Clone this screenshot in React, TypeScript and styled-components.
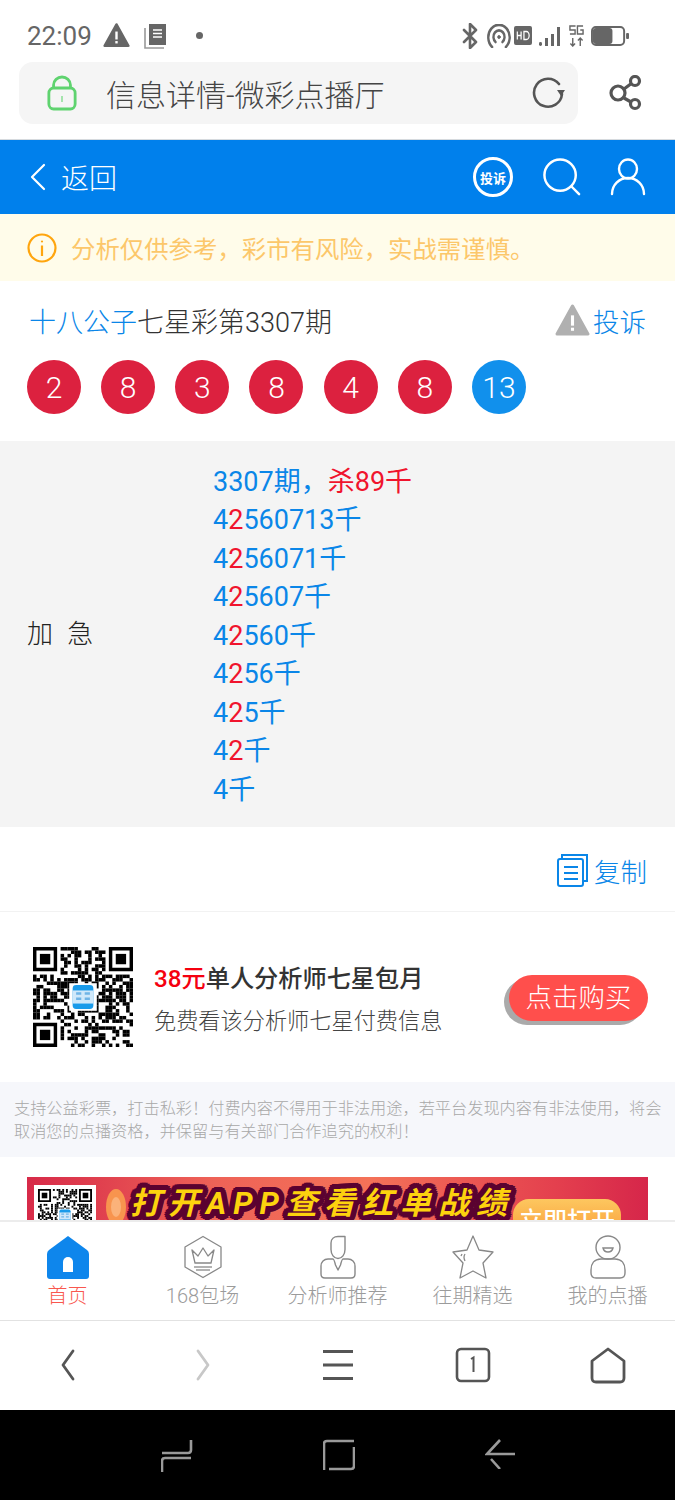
import React from "react";
import styled, { createGlobalStyle } from "styled-components";

const GlobalStyle = createGlobalStyle`
  html, body { margin: 0; padding: 0; background: #fff; }
  body { font-family: Roboto, "Noto Sans CJK SC", sans-serif; }
  * { box-sizing: border-box; }
`;

const Page = styled.div`
  width: 675px;
  height: 1500px;
  display: flex;
  flex-direction: column;
  overflow: hidden;
  background: #fff;
`;

const StatusBar = styled.div`
  height: 62px;
  padding: 9px 46px 0 27px;
  display: flex;
  align-items: center;
  color: #666;
  flex: none;
`;
const Time = styled.span`
  font-size: 26px;
  margin-right: 11px;
`;
const StatusRight = styled.div`
  margin-left: auto;
  display: flex;
  align-items: center;
  gap: 3px;
`;
const Spacer = styled.span<{ $w: number }>`
  width: ${(p) => p.$w}px;
  flex: none;
`;
const Dot = styled.span`
  width: 7px;
  height: 7px;
  border-radius: 50%;
  background: #666;
  margin-left: 26px;
`;

const BrowserBar = styled.div`
  height: 78px;
  flex: none;
  display: flex;
  padding: 0 19px 15px;
  align-items: stretch;
  border-bottom: 1px solid #d6dade;
`;
const UrlBox = styled.div`
  width: 559px;
  background: #f5f5f5;
  border-radius: 14px;
  display: flex;
  align-items: center;
  padding: 0 12px 0 28px;
`;
const UrlText = styled.span`
  font-size: 30px;
  font-weight: 300;
  color: #444;
  margin-left: 29px;
  flex: 1;
  white-space: nowrap;
`;
const ShareSlot = styled.div`
  flex: 1;
  display: flex;
  align-items: center;
  justify-content: flex-end;
  padding-right: 13px;
`;

const AppHeader = styled.div`
  height: 74px;
  flex: none;
  background: #0080ec;
  display: flex;
  align-items: center;
  padding: 0 29px 0 29px;
  color: #fff;
`;
const BackText = styled.span`
  font-size: 28px;
  font-weight: 300;
  margin-left: 14px;
`;
const HeaderIcons = styled.div`
  margin-left: auto;
  display: flex;
  align-items: center;
  gap: 29.5px;
`;
const ComplainBadge = styled.div`
  width: 40px;
  height: 40px;
  border: 3px solid #fff;
  border-radius: 50%;
  font-size: 13px;
  font-weight: 700;
  display: flex;
  align-items: center;
  justify-content: center;
  white-space: nowrap;
`;

const Notice = styled.div`
  height: 67px;
  flex: none;
  background: #fffcea;
  display: flex;
  align-items: center;
  padding: 0 0 0 27px;
  gap: 14px;
  font-size: 24.4px;
  color: #fcc76a;
  white-space: nowrap;
`;

const InfoBlock = styled.div`
  height: 160px;
  flex: none;
  padding: 19px 29px 0 27px;
`;
const TitleRow = styled.div`
  display: flex;
  align-items: center;
  height: 40px;
`;
const Title = styled.div`
  font-size: 27px;
  font-weight: 300;
  color: #333;
  margin-left: 2px;
  white-space: nowrap;
`;
const Blue = styled.span`
  color: #0a86e8;
`;
const Red = styled.span`
  color: #f0142d;
`;
const Complain = styled.div`
  margin-left: auto;
  display: flex;
  align-items: center;
  gap: 3px;
  font-size: 26.5px;
  font-weight: 300;
  color: #0a86e8;
`;
const Balls = styled.div`
  display: flex;
  gap: 20.17px;
  margin-top: 20px;
`;
const Ball = styled.div<{ $blue?: boolean }>`
  width: 54px;
  height: 54px;
  border-radius: 50%;
  background: ${(p) => (p.$blue ? "#1190ec" : "#dc213f")};
  color: #fff;
  font-size: 30px;
  font-weight: 300;
  display: flex;
  align-items: center;
  justify-content: center;
`;

const Prediction = styled.div`
  height: 386px;
  flex: none;
  background: #f4f4f4;
  display: flex;
  align-items: center;
  padding: 22px 0 18px 27px;
`;
const PredictionLabel = styled.div`
  width: 186px;
  font-size: 26px;
  font-weight: 300;
  color: #222;
  word-spacing: 8px;
  margin-bottom: 10px;
`;
const Lines = styled.div`
  font-size: 27px;
  line-height: 38.5px;
  color: #0a86e8;
  white-space: nowrap;
`;

const CopyRow = styled.div`
  height: 85px;
  flex: none;
  border-bottom: 1px solid #f2f2f2;
  display: flex;
  align-items: center;
  justify-content: flex-end;
  gap: 4px;
  padding: 2px 28px 0 0;
  font-size: 26.5px;
  font-weight: 300;
  color: #0a86e8;
`;

const Promo = styled.div`
  height: 170px;
  flex: none;
  display: flex;
  align-items: center;
  padding: 0 27px 0 33px;
`;
const PromoText = styled.div`
  margin-left: 21px;
  display: flex;
  flex-direction: column;
  gap: 9px;
`;
const PromoTitle = styled.div`
  font-size: 24.2px;
  font-weight: 500;
  color: #333;
  white-space: nowrap;
`;
const PromoSub = styled.div`
  font-size: 22.2px;
  font-weight: 300;
  color: #444;
  white-space: nowrap;
`;
const Price = styled.span`
  color: #f5000f;
`;
const BuyButton = styled.div`
  margin-left: auto;
  margin-top: 2px;
  width: 139px;
  height: 46px;
  border-radius: 23px;
  background: #ff4f4c;
  box-shadow: -5px 4px 0 #aaa;
  color: #fff;
  font-size: 26.5px;
  font-weight: 300;
  display: flex;
  align-items: center;
  justify-content: center;
  padding-bottom: 5px;
`;

const Disclaimer = styled.div`
  height: 75px;
  flex: none;
  background: #f6f7fb;
  padding: 15px 8px 0 14px;
  font-size: 16.2px;
  line-height: 23px;
  font-weight: 300;
  color: #a8a8a8;
`;

const BannerWrap = styled.div`
  height: 63px;
  flex: none;
  padding: 20px 27px 0;
  overflow: hidden;
`;
const Banner = styled.div`
  height: 90px;
  background: linear-gradient(90deg, #d72b49 0%, #ee6257 30%, #f47258 55%, #e4404e 85%, #d6264a 100%);
  display: flex;
  align-items: flex-start;
  padding: 8px 0 0 7px;
`;
const BannerQr = styled.div`
  width: 62px;
  height: 62px;
  background: #fff;
  padding: 4px;
  flex: none;
`;
const BannerCoin = styled.svg`
  margin-left: 9px;
  flex: none;
`;
const blobShadow = Array.from({ length: 16 }, (_, i) => {
  const a = (i * Math.PI) / 8;
  return `${(Math.cos(a) * 5.5).toFixed(1)}px ${(Math.sin(a) * 5.5).toFixed(1)}px 0 #5a0230`;
}).join(", ");
const BannerSlogan = styled.div`
  margin: 3px 0 0 3px;
  height: 32px;
  color: #fdd20e;
  font-size: 31px;
  font-weight: 700;
  font-style: italic;
  letter-spacing: 7px;
  line-height: 32px;
  white-space: nowrap;
  flex: none;
  text-shadow: ${blobShadow};
`;
const BannerButton = styled.div`
  margin-left: -1px;
  margin-top: 14px;
  width: 108px;
  height: 50px;
  border-radius: 16px;
  background: linear-gradient(180deg, #fdc75f, #f98f2c);
  color: #fff;
  font-size: 24px;
  font-weight: 500;
  text-align: center;
  line-height: 38px;
  padding-top: 3px;
  flex: none;
`;

const TabBar = styled.div`
  height: 101px;
  flex: none;
  background: #fff;
  border-top: 2px solid #ececec;
  border-bottom: 1px solid #e2e2e2;
  display: grid;
  grid-template-columns: repeat(5, 135px);
`;
const Tab = styled.div<{ $active?: boolean }>`
  display: flex;
  flex-direction: column;
  align-items: center;
  padding-top: 13px;
  font-size: 20px;
  font-weight: 300;
  color: ${(p) => (p.$active ? "#f9574e" : "#9b9b9b")};
  white-space: nowrap;
`;
const TabIcon = styled.div`
  height: 44px;
  margin-bottom: 1px;
`;

const BrowserNav = styled.div`
  height: 89px;
  flex: none;
  display: grid;
  grid-template-columns: repeat(5, 135px);
  align-items: center;
  justify-items: center;
  padding-bottom: 1px;
`;
const SystemNav = styled.div`
  height: 90px;
  flex: none;
  background: #000;
  display: flex;
  align-items: flex-start;
  justify-content: center;
  gap: 130px;
  padding: 29px 0 0;
`;

const Qr = ({ size, seed = 7 }: { size: number; seed?: number }) => {
  const n = 29;
  let s = seed;
  const rand = () => {
    s = (s * 1103515245 + 12345) & 0x7fffffff;
    return (s >> 12) % 100;
  };
  const inFinder = (x: number, y: number) =>
    (x < 8 && y < 8) || (x > n - 9 && y < 8) || (x < 8 && y > n - 9);
  const cells: React.ReactElement[] = [];
  for (let y = 0; y < n; y++) {
    for (let x = 0; x < n; x++) {
      if (!inFinder(x, y) && rand() < 50) {
        cells.push(<rect key={`${x}-${y}`} x={x} y={y} width={1.02} height={1.02} />);
      }
    }
  }
  const finder = (x: number, y: number) => (
    <g key={`${x}-${y}`}>
      <path d={`M${x} ${y}h7v7h-7zM${x + 1} ${y + 1}v5h5v-5z`} fillRule="evenodd" />
      <rect x={x + 2} y={y + 2} width={3} height={3} />
    </g>
  );
  return (
    <svg width={size} height={size} viewBox={`0 0 ${n} ${n}`} style={{ flex: "none", display: "block" }}>
      {cells}
      {finder(0, 0)}
      {finder(n - 7, 0)}
      {finder(0, n - 7)}
      <rect x={10.5} y={10.5} width={8} height={8} fill="#fff" />
      <rect x={11.5} y={11} width={6} height={7} rx={1} fill="#1a9bea" />
      <rect x={11.5} y={12.6} width={6} height={3.8} fill="#cfe8fa" />
      <path d="M12.500 13.500h1.500M12.500 15h1.500M15 13.500h1.500M15 15h1.500" stroke="#6fb4e6" strokeWidth={0.7} />
    </svg>
  );
};

const Line = ({ d, c = "currentColor", w = 2, size, h }: { d: string; c?: string; w?: number; size: number; h?: number }) => (
  <svg width={size} height={h ?? size} viewBox={`0 0 ${size} ${h ?? size}`} fill="none" stroke={c} strokeWidth={w} strokeLinecap="round" strokeLinejoin="round" style={{ display: "block" }}>
    <path d={d} />
  </svg>
);

const BluetoothIcon = () => <Line size={16} h={26} c="#666" w={2.6} d="M2 7l12 12-6 6V1l6 6L2 19" />;
const HotspotIcon = () => (
  <svg width={24} height={24} viewBox="0 0 28 24" preserveAspectRatio="none" fill="none" stroke="#666" strokeWidth={2.8} strokeLinecap="round">
    <path d="M6 23a12.500 12.500 0 1 1 16 0" />
    <path d="M10 18a6.500 6.500 0 1 1 8 0" />
    <circle cx={14} cy={13} r={1.5} fill="#666" strokeWidth={1} />
  </svg>
);
const HdIcon = () => (
  <svg width={18} height={19} viewBox="0 0 19 19" preserveAspectRatio="none">
    <rect width={19} height={19} rx={2} fill="#666" />
    <path d="M3.500 5.500v8M3.500 9.500h4M7.500 5.500v8M10.500 5.500v8h2.500a3 4 0 0 0 0-8z" fill="none" stroke="#fff" strokeWidth={1.3} />
  </svg>
);
const SignalIcon = () => (
  <svg width={24} height={22} viewBox="0 0 24 22" fill="#666">
    <rect x={1} y={17} width={3} height={4} rx={1.4} />
    <rect x={7} y={13} width={3} height={8} />
    <rect x={13} y={9} width={3} height={12} />
    <rect x={19} y={2} width={3} height={19} />
  </svg>
);
const FiveGIcon = () => (
  <svg width={15} height={22} viewBox="0 0 16 22" preserveAspectRatio="none" fill="none" stroke="#666" strokeWidth={1.5}>
    <path d="M7 1H1v4h5.500v4H1M15 1H9v8h6V5h-3" />
    <path d="M4 21v-8M1.500 18.500L4 21l2.500-2.500M12 21v-8M9.500 15.500L12 13l2.500 2.500" />
  </svg>
);
const BatteryIcon = () => (
  <svg width={38} height={20} viewBox="0 0 39 20" preserveAspectRatio="none">
    <rect x={1} y={1} width={33} height={18} rx={4} fill="#fff" stroke="#666" strokeWidth={2} />
    <rect x={2} y={2} width={20} height={16} rx={3} fill="#666" />
    <rect x={36} y={7} width={3} height={6} rx={1} fill="#666" />
  </svg>
);
const WarnSolid = ({ c, size }: { c: string; size: number }) => (
  <svg width={size} height={size} viewBox="0 0 34 34">
    <path d="M17 3L32 30H2z" fill={c} stroke={c} strokeWidth={3} strokeLinejoin="round" />
    <rect x={15.5} y={12} width={3} height={10} fill="#fff" />
    <rect x={15.5} y={24} width={3} height={3} fill="#fff" />
  </svg>
);
const NoteIcon = () => (
  <svg width={28} height={28} viewBox="0 0 28 28">
    <path d="M3 6v20h19" fill="none" stroke="#999" strokeWidth={1.6} />
    <path d="M7 2h17v21H7z" fill="#666" />
    <path d="M11 8h9M11 11.500h9M11 15h9" stroke="#fff" strokeWidth={1.4} />
  </svg>
);
const LockIcon = () => (
  <svg width={30} height={36} viewBox="0 0 32 36" preserveAspectRatio="none" fill="none" stroke="#5fd36f" strokeWidth={3}>
    <rect x={2} y={13} width={28} height={21} rx={5} />
    <path d="M7 13V10a9 8 0 0 1 18 0v3" />
    <path d="M16 21v6" strokeWidth={2} stroke="#9fe3a8" />
  </svg>
);
const ReloadIcon = () => (
  <svg width={34} height={32} viewBox="0 0 34 32" fill="none" stroke="#555" strokeWidth={2.6}>
    <path d="M30 17a14 14 0 1 1-3-10" strokeLinecap="round" />
    <path d="M25 13h8l-4 6z" fill="#555" stroke="none" />
  </svg>
);
const ShareIcon = () => (
  <svg width={34} height={36} viewBox="0 0 34 36" fill="none" stroke="#555" strokeWidth={3.2}>
    <circle cx={9} cy={18} r={7} />
    <circle cx={26} cy={6} r={4.500} />
    <circle cx={26} cy={29} r={4.500} />
    <path d="M15 14l8-6M15 23l7 4" />
  </svg>
);
const InfoIcon = () => (
  <svg width={30} height={30} viewBox="0 0 30 30" fill="none" stroke="#ffa50e" strokeWidth={2.2} style={{ flex: "none" }}>
    <circle cx={15} cy={15} r={13.5} />
    <path d="M15 12.500V23" />
    <circle cx={15} cy={8.5} r={1.1} fill="#ffa50e" stroke="none" />
  </svg>
);
const CopyIcon = () => (
  <svg width={34} height={34} viewBox="0 0 34 34" fill="none" stroke="#0a86e8" strokeWidth={2}>
    <path d="M6 5V2h25v26h-3" />
    <rect x={2} y={6} width={25} height={27} rx={2} fill="#fff" />
    <path d="M8 14h14M8 20h14M8 26h14" />
  </svg>
);

const HomeSolid = () => (
  <svg width={42} height={44} viewBox="0 0 42 44">
    <path d="M21 1L40 15q2 1.500 2 4v22q0 3-3 3H3q-3 0-3-3V19q0-2.500 2-4z" fill="#0e86ec" />
    <path d="M16 37V27a5 5 0 0 1 10 0v10z" fill="#fff" />
  </svg>
);
const CrownIcon = () => (
  <svg width={40} height={44} viewBox="0 0 40 44" fill="none" stroke="#888" strokeWidth={1.3} strokeLinejoin="round">
    <path d="M20 1.500L38 12v20L20 42.500 2 32V12z" />
    <path d="M9 15l6 6 5-8 5 8 6-6-3 13H12z" />
    <path d="M11 32h18" />
    <path d="M13 35h14" />
  </svg>
);
const AnalystIcon = () => (
  <svg width={38} height={44} viewBox="0 0 38 44" fill="none" stroke="#888" strokeWidth={1.4} strokeLinejoin="round">
    <path d="M12 8c0-4 3-6.500 7-6.500h7v13c0 5-3 9-7 9s-7-4-7-9z" />
    <path d="M9 24h5c1 0 1.500 2 2.500 6l2.500 5 2.500-5c1-4 1.500-6 2.500-6h5c4 0 7 3 7 7v8c0 3-2 4-4 4H6c-2 0-4-1-4-4v-8c0-4 3-7 7-7z" />
  </svg>
);
const StarIcon = () => (
  <svg width={42} height={44} viewBox="0 0 42 44" fill="none" stroke="#888" strokeWidth={1.3} strokeLinejoin="round">
    <path d="M21 1l6 14 14 2-10 11 3 15-13-7-13 7 3-15L1 17l14-2z" />
    <path d="M10 19l-1 2M13 19q-2 3 0 7" />
  </svg>
);
const MeIcon = () => (
  <svg width={38} height={44} viewBox="0 0 38 44" fill="none" stroke="#888" strokeWidth={1.4}>
    <ellipse cx={19} cy={12.500} rx={12} ry={11.500} />
    <path d="M14 13h10q-1 4-5 4t-5-4z" />
    <path d="M12 24h14c7 0 10 5 10 11v3c0 3-2 5-5 5H7c-3 0-5-2-5-5v-3c0-6 3-11 10-11z" />
  </svg>
);

const NavBack = ({ c, flip }: { c: string; flip?: boolean }) => (
  <Line size={16} h={32} c={c} w={2.8} d={flip ? "M3 2l10 14L3 30" : "M13 2L3 16l10 14"} />
);
const NavMenu = () => (
  <svg width={32} height={32} viewBox="0 0 32 32" stroke="#555" strokeWidth={3}>
    <path d="M1 2.500h30M1 16h30M1 29.500h30" />
  </svg>
);
const NavTabs = () => (
  <svg width={36} height={36} viewBox="0 0 36 36" fill="none" stroke="#555" strokeWidth={2.6}>
    <rect x={2} y={2} width={32} height={32} rx={4} />
    <path d="M16 12l2.500-1.500V25" strokeWidth={2} />
  </svg>
);
const NavHome = () => (
  <svg width={36} height={37} viewBox="0 0 36 37" fill="none" stroke="#555" strokeWidth={2.8} strokeLinejoin="round">
    <path d="M18 2L34 14v17q0 4-4 4H6q-4 0-4-4V14z" />
  </svg>
);

const lines = ["42560713", "4256071", "425607", "42560", "4256", "425", "42", "4"];
const tabs = [
  { label: "首页", icon: <HomeSolid />, active: true },
  { label: "168包场", icon: <CrownIcon /> },
  { label: "分析师推荐", icon: <AnalystIcon /> },
  { label: "往期精选", icon: <StarIcon /> },
  { label: "我的点播", icon: <MeIcon /> },
];

export default function App() {
  return (
    <Page>
      <GlobalStyle />
      <StatusBar>
        <Time>22:09</Time>
        <WarnSolid c="#666" size={27} />
        <Spacer $w={12} />
        <NoteIcon />
        <Dot />
        <StatusRight>
          <BluetoothIcon />
          <Spacer $w={3} />
          <HotspotIcon />
          <HdIcon />
          <Spacer $w={0} />
          <SignalIcon />
          <Spacer $w={1} />
          <FiveGIcon />
          <Spacer $w={1} />
          <BatteryIcon />
        </StatusRight>
      </StatusBar>

      <BrowserBar>
        <UrlBox>
          <LockIcon />
          <UrlText>信息详情-微彩点播厅</UrlText>
          <ReloadIcon />
        </UrlBox>
        <ShareSlot>
          <ShareIcon />
        </ShareSlot>
      </BrowserBar>

      <AppHeader>
        <Line size={18} h={28} c="#fff" w={2.2} d="M15 2L3 14l12 12" />
        <BackText>返回</BackText>
        <HeaderIcons>
          <ComplainBadge>投诉</ComplainBadge>
          <svg width={38} height={40} viewBox="0 0 40 40" fill="none" stroke="#fff" strokeWidth={2.6} strokeLinecap="round">
            <circle cx={18} cy={18} r={16.5} />
            <path d="M30 30l8 8" />
          </svg>
          <svg width={36} height={38} viewBox="0 0 36 38" fill="none" stroke="#fff" strokeWidth={2.4} strokeLinecap="round">
            <ellipse cx={18} cy={11} rx={9} ry={9.500} />
            <path d="M2 36c0-9 7-16 16-16s16 7 16 16" />
          </svg>
        </HeaderIcons>
      </AppHeader>

      <Notice>
        <InfoIcon />
        <span>分析仅供参考，彩市有风险，实战需谨慎。</span>
      </Notice>

      <InfoBlock>
        <TitleRow>
          <Title>
            <Blue>十八公子</Blue>七星彩第3307期
          </Title>
          <Complain>
            <WarnSolid c="#b0b0b0" size={35} />
            投诉
          </Complain>
        </TitleRow>
        <Balls>
          {[2, 8, 3, 8, 4, 8].map((n, i) => (
            <Ball key={i}>{n}</Ball>
          ))}
          <Ball $blue>13</Ball>
        </Balls>
      </InfoBlock>

      <Prediction>
        <PredictionLabel>加 急</PredictionLabel>
        <Lines>
          <div>
            3307期，<Red>杀89千</Red>
          </div>
          {lines.map((l) => (
            <div key={l}>
              {l[0]}
              {l[1] && <Red>{l[1]}</Red>}
              {l.slice(2)}千
            </div>
          ))}
        </Lines>
      </Prediction>

      <CopyRow>
        <CopyIcon />
        复制
      </CopyRow>

      <Promo>
        <Qr size={100} />
        <PromoText>
          <PromoTitle>
            <Price>38元</Price>单人分析师七星包月
          </PromoTitle>
          <PromoSub>免费看该分析师七星付费信息</PromoSub>
        </PromoText>
        <BuyButton>点击购买</BuyButton>
      </Promo>

      <Disclaimer>
        支持公益彩票，打击私彩！付费内容不得用于非法用途，若平台发现内容有非法使用，将会取消您的点播资格，并保留与有关部门合作追究的权利！
      </Disclaimer>

      <BannerWrap>
        <Banner>
          <BannerQr>
            <Qr size={54} seed={23} />
          </BannerQr>
          <BannerCoin width={22} height={40} viewBox="0 0 22 40">
            <ellipse cx={11} cy={22} rx={10} ry={18} fill="#f8944e" />
            <ellipse cx={11} cy={22} rx={5} ry={10} fill="#fbb27a" />
          </BannerCoin>
          <BannerSlogan>打开APP查看红单战绩</BannerSlogan>
          <BannerButton>立即打开</BannerButton>
        </Banner>
      </BannerWrap>

      <TabBar>
        {tabs.map((t) => (
          <Tab key={t.label} $active={t.active}>
            <TabIcon>{t.icon}</TabIcon>
            {t.label}
          </Tab>
        ))}
      </TabBar>

      <BrowserNav>
        <NavBack c="#555" />
        <NavBack c="#c8c8c8" flip />
        <NavMenu />
        <NavTabs />
        <NavHome />
      </BrowserNav>

      <SystemNav>
        <svg width={32} height={34} viewBox="0 0 32 34" fill="none" stroke="#9a9a9a" strokeWidth={2.6}>
          <path d="M30 1v10q0 3-3 3H1M1 33V22q0-3 3-3h26" />
        </svg>
        <svg width={32} height={32} viewBox="0 0 32 32" fill="none" stroke="#9a9a9a" strokeWidth={2.6}>
          <path d="M31 2H4q-3 0-3 3v26M6 30h22q3 0 3-3V8" />
        </svg>
        <svg width={30} height={30} viewBox="0 0 30 30" fill="none" stroke="#9a9a9a" strokeWidth={2.6}>
          <path d="M15 1L2 15h28M6 20l9 10" />
        </svg>
      </SystemNav>
    </Page>
  );
}
